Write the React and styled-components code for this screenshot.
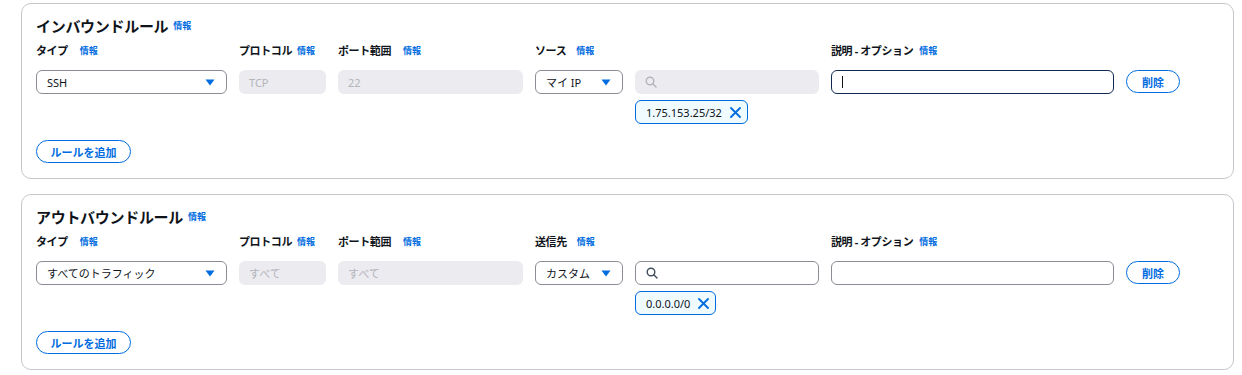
import styled, { createGlobalStyle } from "styled-components"

const GlobalStyle = createGlobalStyle`
body {
  margin: 0;
  background: #ffffff;
  font-family: "Noto Sans", "Noto Sans CJK JP", sans-serif;
  color: #0f141a;
}
`

const Page = styled.div`
  padding: 3px 8px 0 21px;
  display: flex;
  flex-direction: column;
  gap: 15px;
`

const Panel = styled.section`
  border: 1px solid #c6c6cd;
  border-radius: 10px;
  padding: 11px 14px 15px 14px;
  display: flex;
  flex-direction: column;
  align-items: flex-start;
`

const Title = styled.h2`
  margin: 0;
  height: 20px;
  display: flex;
  align-items: center;
  gap: 5px;
  font-size: 15px;
  font-weight: 700;
  letter-spacing: -0.3px;
`

const Info = styled.a`
  font-size: 9px;
  font-weight: 700;
  color: #006ce0;
  text-decoration: none;
  letter-spacing: 0;
`

const Grid = styled.div`
  margin-top: 8px;
  display: grid;
  grid-template-columns: 191px 87px 185px 88px 184px 283px auto;
  grid-template-rows: auto auto auto;
  align-items: start;
  column-gap: 12px;
`

const Label = styled.div`
  height: 14px;
  display: flex;
  align-items: center;
  gap: ${(p) => p.$gap}px;
  font-size: 11px;
  font-weight: 700;
  letter-spacing: -0.4px;
  white-space: nowrap;
`

const Field = styled.div`
  margin-top: 13px;
  height: 24px;
  box-sizing: border-box;
  border-radius: 6px;
  display: flex;
  align-items: center;
  gap: 6px;
  padding: 0 10px;
  font-size: 11px;
  grid-row: 2;
  grid-column: ${(p) => p.$col};
`

const Select = styled(Field)`
  border: 1px solid #8c8c94;
  justify-content: space-between;
  padding-right: 11px;
  color: #0f141a;
`

const Disabled = styled(Field)`
  background: #ebebf0;
  color: #b4b4bb;
`

const Input = styled(Field)`
  border: ${(p) => (p.$focused ? "1.5px solid #0f2a52" : "1px solid #8c8c94")};
`

const Caret = styled.span`
  width: 1px;
  height: 12px;
  background: #0f141a;
`

const PillButton = styled.button`
  height: 23px;
  box-sizing: border-box;
  border: 1.5px solid #006ce0;
  border-radius: 12px;
  background: #ffffff;
  color: #006ce0;
  font-family: inherit;
  font-size: 11px;
  font-weight: 700;
  width: ${(p) => p.$w}px;
  padding: 0;
`

const DeleteButton = styled(PillButton)`
  grid-row: 2;
  grid-column: 7;
  margin-top: 13px;
  height: 23px;
`

const Token = styled.div`
  grid-row: 3;
  grid-column: 5;
  justify-self: start;
  margin-top: 6px;
  height: 24px;
  box-sizing: border-box;
  border: 1px solid #006ce0;
  border-radius: 6px;
  background: #f0fbff;
  display: flex;
  align-items: center;
  gap: 8px;
  padding: 0 6px 0 10px;
  font-size: 11px;
`

const AddButton = styled(PillButton)`
  margin-top: 16px;
`

const Triangle = () => (
  <svg width="10" height="7" viewBox="0 0 10 7">
    <path d="M0.5 0.5 L9.5 0.5 L5 6.5 Z" fill="#006ce0" />
  </svg>
)

const SearchIcon = ({ color }) => (
  <svg width="12" height="12" viewBox="0 0 12 12" fill="none" stroke={color} strokeWidth="1.4">
    <circle cx="5" cy="5" r="3.8" />
    <path d="M7.8 7.8 L11 11" strokeLinecap="round" />
  </svg>
)

const CloseIcon = () => (
  <svg width="11" height="11" viewBox="0 0 11 11" stroke="#006ce0" strokeWidth="1.8" strokeLinecap="round">
    <path d="M1 1 L10 10 M10 1 L1 10" />
  </svg>
)

const RuleSet = ({ title, target, rule }) => (
  <Panel>
    <Title>
      {title}
      <Info>情報</Info>
    </Title>
    <Grid>
      <Label $gap={12}>
        タイプ<Info>情報</Info>
      </Label>
      <Label $gap={5}>
        プロトコル<Info>情報</Info>
      </Label>
      <Label $gap={12}>
        ポート範囲<Info>情報</Info>
      </Label>
      <Label $gap={10}>
        {target}
        <Info>情報</Info>
      </Label>
      <div />
      <Label $gap={6}>
        説明 - オプション<Info>情報</Info>
      </Label>
      <div />

      <Select $col={1}>
        {rule.type}
        <Triangle />
      </Select>
      <Disabled $col={2}>{rule.protocol}</Disabled>
      <Disabled $col={3}>{rule.port}</Disabled>
      <Select $col={4}>
        {rule.source}
        <Triangle />
      </Select>
      {rule.searchEnabled ? (
        <Input $col={5}>
          <SearchIcon color="#414d5c" />
        </Input>
      ) : (
        <Disabled $col={5}>
          <SearchIcon color="#b4b4bb" />
        </Disabled>
      )}
      <Input $col={6} $focused={rule.focused}>
        {rule.focused && <Caret />}
      </Input>
      <DeleteButton $w={54}>削除</DeleteButton>

      <Token>
        {rule.cidr}
        <CloseIcon />
      </Token>
    </Grid>
    <AddButton $w={95}>ルールを追加</AddButton>
  </Panel>
)

export default function App() {
  return (
    <>
      <GlobalStyle />
      <Page>
        <RuleSet
          title="インバウンドルール"
          target="ソース"
          rule={{
            type: "SSH",
            protocol: "TCP",
            port: "22",
            source: "マイ IP",
            cidr: "1.75.153.25/32",
            searchEnabled: false,
            focused: true,
          }}
        />
        <RuleSet
          title="アウトバウンドルール"
          target="送信先"
          rule={{
            type: "すべてのトラフィック",
            protocol: "すべて",
            port: "すべて",
            source: "カスタム",
            cidr: "0.0.0.0/0",
            searchEnabled: true,
            focused: false,
          }}
        />
      </Page>
    </>
  )
}
